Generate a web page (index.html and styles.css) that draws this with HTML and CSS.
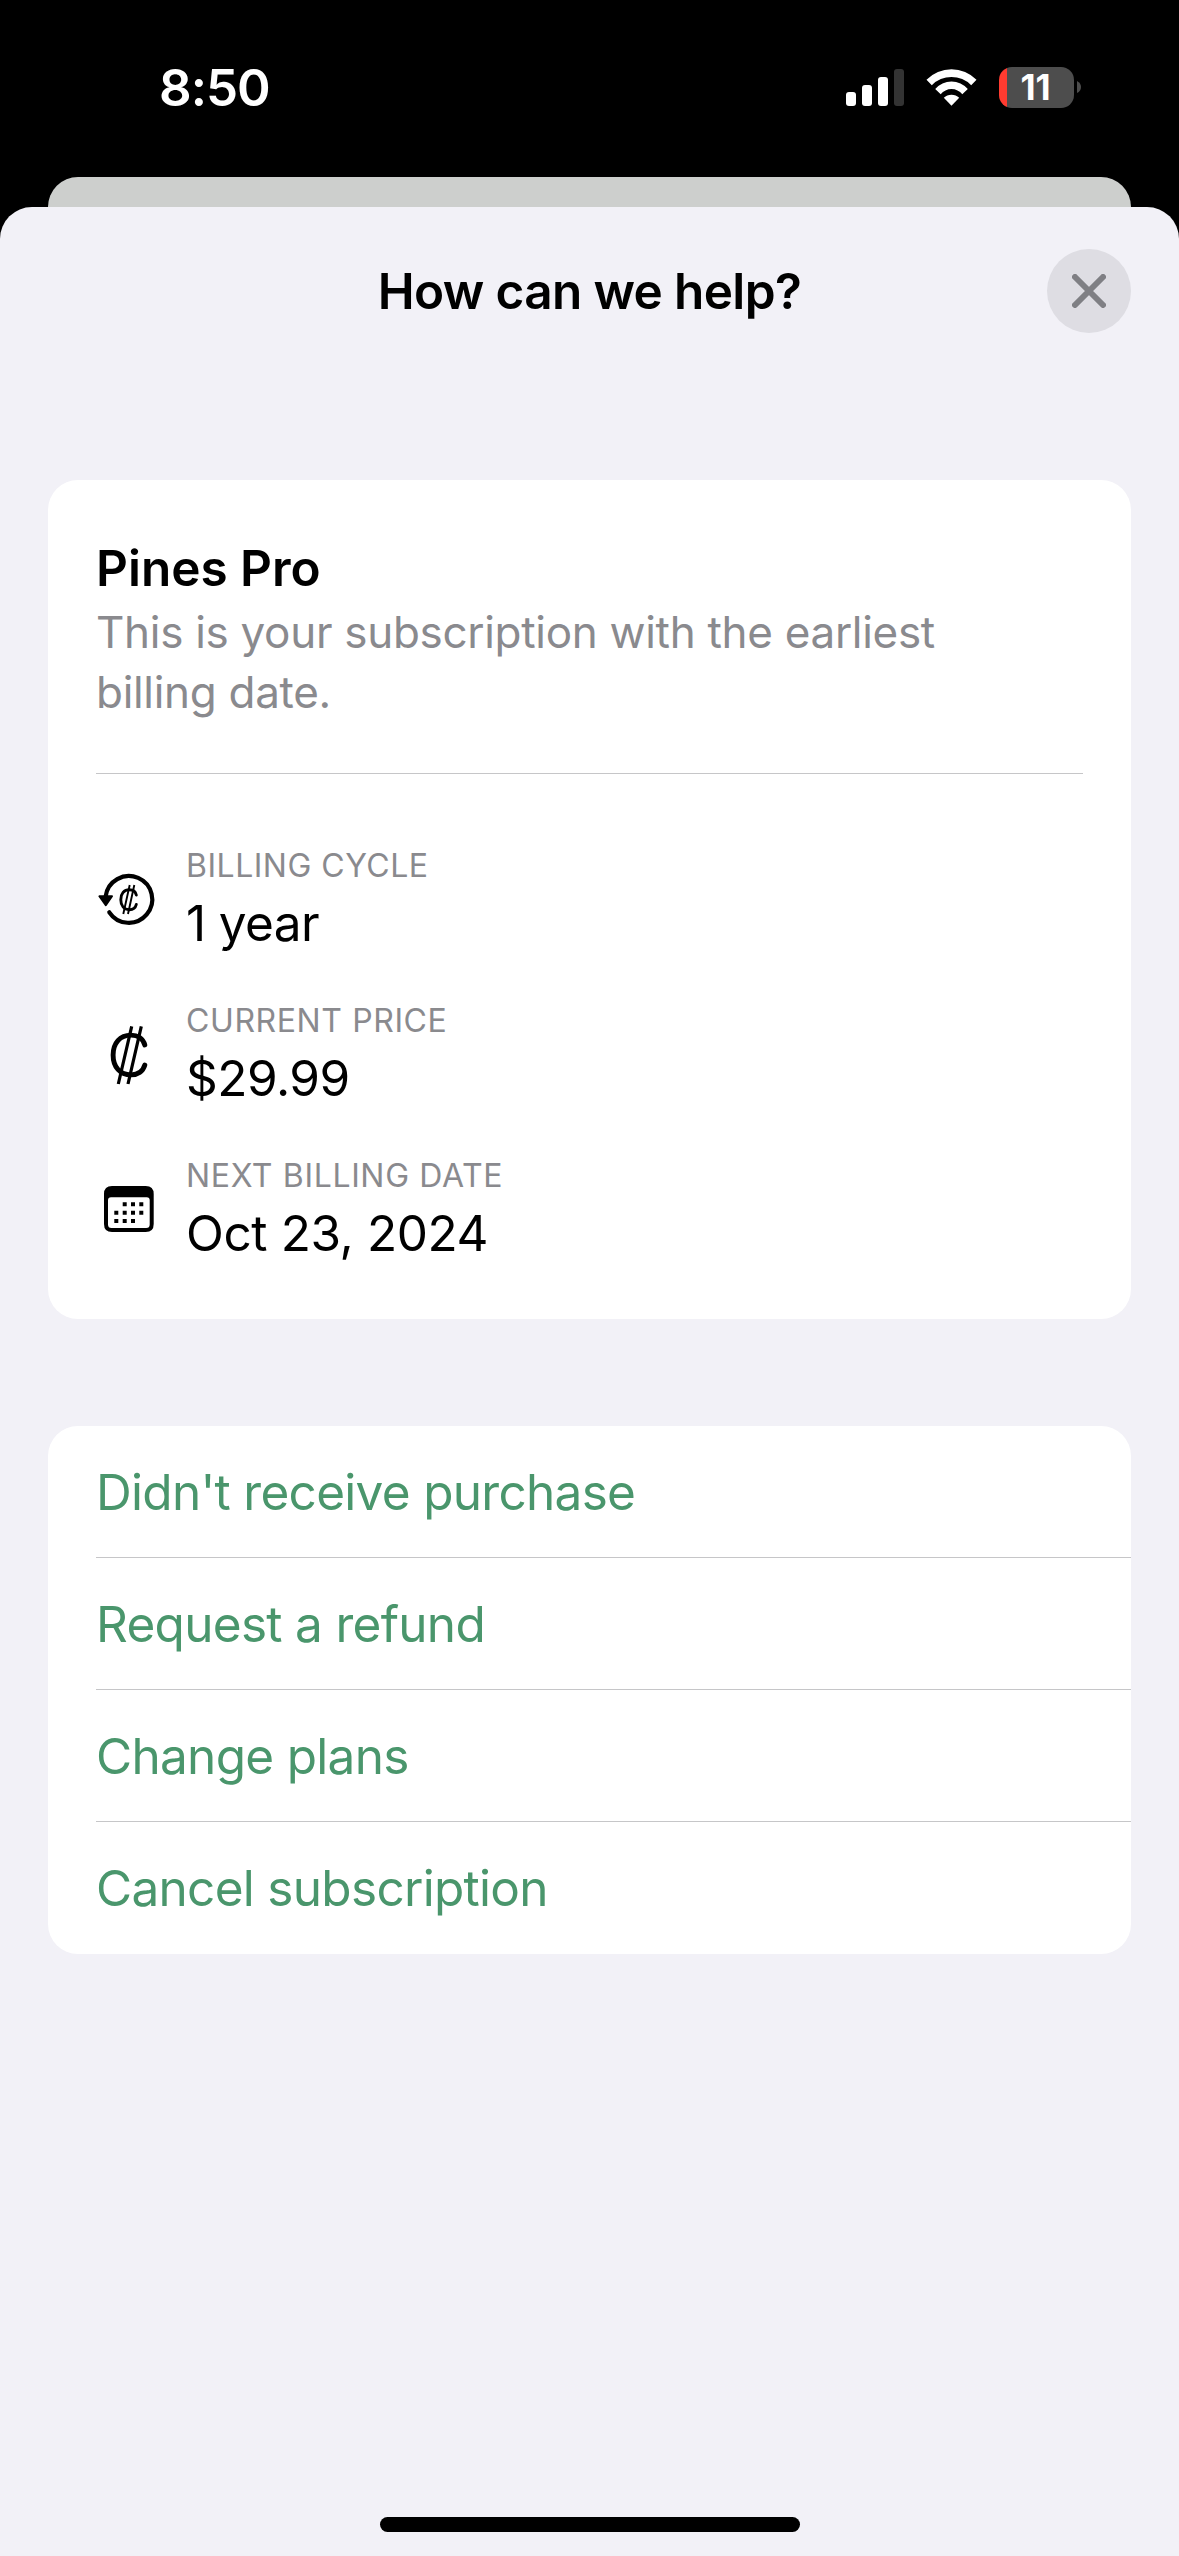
FILE: index.html
```html
<!DOCTYPE html>
<html lang="en">
<head>
<meta charset="utf-8">
<title>How can we help?</title>
<link rel="stylesheet" href="styles.css">
</head>
<body>
<div class="screen">
  <header class="status">
    <span class="time">8:50</span>
    <div class="indicators">
      <svg class="signal" width="58" height="37" viewBox="0 0 58 37" fill="#fff">
        <rect x="0" y="23" width="10" height="14" rx="3"/>
        <rect x="16" y="16" width="10" height="21" rx="3"/>
        <rect x="32" y="8" width="10" height="29" rx="3"/>
        <rect x="48" y="0" width="10" height="37" rx="3" fill="#333"/>
      </svg>
      <svg class="wifi" width="51" height="37" viewBox="0 0 51 37" fill="#fff">
        <path d="M.5 10.8A35 35 0 0 1 50.5 10.8L45.2 16.2A27.500 27.500 0 0 0 5.8 16.2Z"/>
        <path d="M9.2 19.9A21.500 21.500 0 0 1 41.800 19.9L36.3 25.2A14 14 0 0 0 14.7 25.2Z"/>
        <path d="M17.8 28.8A11 11 0 0 1 33.2 28.8L25.5 36.8Z"/>
      </svg>
      <div class="battery"><span class="level">11</span></div>
      <svg class="nub" width="4" height="12" viewBox="0 0 4 12"><path d="M0 0Q4 2 4 6T0 12Z" fill="#4d4d4d"/></svg>
    </div>
  </header>
  <div class="backdrop"></div>
  <main class="sheet">
    <div class="titlebar">
      <h1 class="title">How can we help?</h1>
      <button class="close" aria-label="Close">
        <svg width="34" height="34" viewBox="0 0 34 34"><path d="M3 3 31 31M31 3 3 31" stroke="#7f7f84" stroke-width="6" stroke-linecap="round"/></svg>
      </button>
    </div>
    <section class="card plan">
      <h2 class="name">Pines Pro</h2>
      <p class="summary">This is your subscription with the earliest<br>billing date.</p>
      <ul class="details">
        <li class="detail">
          <svg class="icon" width="66" height="66" viewBox="0 0 66 66" fill="none" stroke="#000" stroke-linecap="round">
            <path d="M9.600 32.500A23.400 23.400 0 1 1 13.300 48.300" stroke-width="4.2"/>
            <path d="M3.4 32.2H16L9.800 41.200Z" fill="#000" stroke-width="2" stroke-linejoin="round"/>
            <path d="M40.300 31C39.500 27.800 36.800 25.700 33.400 25.700C28 25.700 24.800 29.800 24.800 35.700S28 45.700 33.400 45.700C36.800 45.700 39.500 43.700 40.300 40.500" stroke-width="2.9"/>
            <path d="M33.700 21 27.300 50M38.300 21 32 50" stroke-width="1.9" stroke-linecap="butt"/>
          </svg>
          <div><div class="label cycle">BILLING CYCLE</div><div class="value year">1 year</div></div>
        </li>
        <li class="detail">
          <svg class="icon" width="66" height="66" viewBox="0 0 66 66" fill="none" stroke="#000" stroke-linecap="round">
            <path d="M48.800 26C47 19.500 41.500 16.100 35 16.100C24 16.100 17.100 24 17.100 36S24 55.900 35 55.900C41.500 55.900 47 52.500 48.800 46" stroke-width="4.900"/>
            <path d="M35.700 7.300 22.300 65M45.300 7.300 32 65" stroke-width="3.2" stroke-linecap="butt"/>
          </svg>
          <div><div class="label price">CURRENT PRICE</div><div class="value amount">$29.99</div></div>
        </li>
        <li class="detail">
          <svg class="icon" width="66" height="66" viewBox="0 0 66 66">
            <path fill-rule="evenodd" d="M16 12H49.700Q57.700 12 57.700 20V50Q57.700 58 49.700 58H16Q8 58 8 50V20Q8 12 16 12ZM15 23.300Q12 23.300 12 26.300V50.500Q12 54 15.500 54H50.200Q53.700 54 53.700 50.500V26.300Q53.700 23.300 50.700 23.300Z"/>
            <path d="M26.700 30.300h4M35 30.300h4M43.300 30.300h4M18.300 38.700h4M26.700 38.700h4M35 38.700h4M43.300 38.700h4M18.300 47h4M26.700 47h4M35 47h4" stroke="#000" stroke-width="4"/>
          </svg>
          <div><div class="label next">NEXT BILLING DATE</div><div class="value date">Oct 23, 2024</div></div>
        </li>
      </ul>
    </section>
    <nav class="card actions">
      <a class="action">Didn't receive purchase</a>
      <a class="action">Request a refund</a>
      <a class="action">Change plans</a>
      <a class="action">Cancel subscription</a>
    </nav>
    <div class="home"></div>
  </main>
</div>
</body>
</html>
```
FILE: styles.css
```css
* { box-sizing: border-box; margin: 0; padding: 0; }
body { background: #000; font-family: Inter, "Liberation Sans", sans-serif; color: #000; }
.screen { width: 1179px; height: 2556px; display: flex; flex-direction: column; overflow: hidden; }
.status { height: 177px; display: flex; justify-content: space-between; padding: 67px 98px 0 159px; color: #fff; }
.time { font-size: 51px; line-height: 42px; font-weight: 600; letter-spacing: -1px; white-space: nowrap; }
.indicators { display: flex; align-items: flex-start; }
.signal { margin-top: 2px; }
.wifi { margin: 2px 22px 0; }
.battery { width: 75px; height: 41px; border-radius: 13px; background: linear-gradient(to right, #ff3b30 8px, #4d4d4d 8px); text-align: center; }
.level { font-size: 35px; font-weight: 700; line-height: 41px; margin-right: 2px; }
.nub { margin: 14px 0 0 3px; }
.backdrop { height: 30px; margin: 0 48px; background: #cdcfcd; border-radius: 30px 30px 0 0; }
.sheet { flex: 1; background: #f2f1f7; border-radius: 32px 32px 0 0; display: flex; flex-direction: column; padding: 42px 48px 24px; }
.titlebar { height: 84px; display: grid; grid-template-columns: 84px 1fr 84px; align-items: center; }
.title { grid-column: 2; text-align: center; font-size: 49.5px; font-weight: 600; letter-spacing: -0.65px; line-height: 60px; white-space: nowrap; }
.close { width: 84px; height: 84px; border: 0; border-radius: 50%; background: #dedde3; display: flex; align-items: center; justify-content: center; }
.card { background: #fff; border-radius: 30px; }
.plan { height: 839px; margin-top: 147px; padding: 58px 48px 0; }
.name { font-size: 49.5px; font-weight: 600; line-height: 60px; }
.summary { font-size: 44px; line-height: 60px; letter-spacing: -0.3px; color: #8a8a8e; padding: 4px 0 51px; white-space: nowrap; border-bottom: 1px solid #c6c6c8; }
.details { list-style: none; padding-top: 72px; display: flex; flex-direction: column; gap: 49px; }
.detail { height: 106px; display: flex; gap: 24px; }
.icon { margin-top: 18px; }
.label { font-size: 32px; line-height: 40px; color: #8a8a8e; white-space: nowrap; }
.cycle { letter-spacing: 0.5px; }
.price { letter-spacing: 0.6px; }
.next { letter-spacing: 0.65px; }
.value { font-size: 49.5px; line-height: 60px; margin-top: 7px; white-space: nowrap; }
.year { letter-spacing: -0.6px; }
.amount { letter-spacing: -0.5px; }
.date { letter-spacing: -0.4px; }
.actions { margin-top: 107px; padding-left: 48px; color: #4a966c; font-size: 49.5px; letter-spacing: -0.7px; }
.action { height: 132px; display: flex; align-items: center; white-space: nowrap; border-bottom: 1px solid #c6c6c8; }
.action:last-child { border-bottom: 0; }
.home { width: 420px; height: 15px; border-radius: 8px; background: #000; margin: auto auto 0; }
```
